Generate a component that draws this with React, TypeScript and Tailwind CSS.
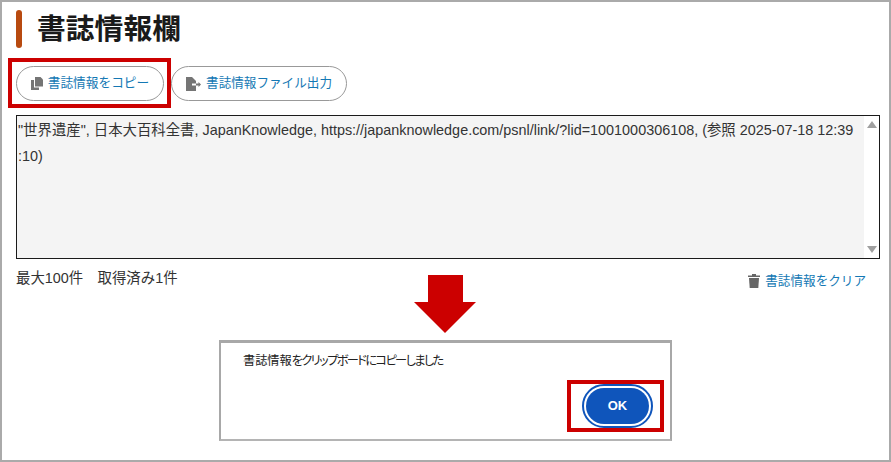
const sans = '"Liberation Sans", "Noto Sans CJK JP", sans-serif';

function CopyIcon() {
  return (
    <svg width="12" height="13" viewBox="0 0 12 13" fill="#757575">
      <path d="M4 0h5.500L12 2.500V9.500H4z" />
      <path d="M0 3h3v7.500h5V13H0z" />
    </svg>
  );
}

function ExportIcon() {
  return (
    <svg width="15" height="14" viewBox="0 0 15 14" fill="#757575">
      <path d="M0 0h6l4 4v2.500H6v2h4V14H0z" />
      <path d="M10 6.500h2.500V5L15 7.500 12.500 10V8.500H10z" />
    </svg>
  );
}

function TrashIcon() {
  return (
    <svg width="12" height="14" viewBox="0 0 12 14" fill="#666666">
      <path d="M0 1.500h4V0h4v1.500h4V3H0z" />
      <path d="M1 4h10l-.7 10H1.700z" />
    </svg>
  );
}

export default function App() {
  return (
    <div
      className="flex h-[462px] w-[891px] flex-col border-2 border-[#aaaaaa] bg-white pl-[14px] pr-[9px] text-[#222222]"
      style={{ fontFamily: sans }}
    >
      <div className="mt-2 flex h-[38px] items-center gap-[15px]">
        <div className="h-[38px] w-[6px] rounded-full bg-[#b84a10]" />
        <h1 className="text-[28.800px] font-bold leading-none text-[#1a1a1a]">書誌情報欄</h1>
      </div>

      <div className="mt-[10px] flex h-[50px] items-start">
        <div className="-ml-2 h-[50px] w-[163px] border-4 border-[#cc0000] pl-1 pt-1">
          <button
            type="button"
            className="flex h-[35px] w-[148px] items-center justify-center gap-[5px] rounded-full border border-[#999999] text-[12.700px] text-[#1478b4]"
          >
            <CopyIcon />
            書誌情報をコピー
          </button>
        </div>
        <button
          type="button"
          className="mt-2 flex h-[35px] w-[176px] items-center justify-center gap-[5px] rounded-full border border-[#999999] text-[12.600px] text-[#1478b4]"
        >
          <ExportIcon />
          書誌情報ファイル出力
        </button>
      </div>

      <div className="mt-[7px] flex h-[144px] w-[864px] border border-[#1a1a1a]">
        <div className="flex-1 bg-[#f4f4f4] pl-px pt-px text-[14.400px] leading-[26px] text-[#333333]">
          "世界遺産", 日本大百科全書, JapanKnowledge, https://japanknowledge.com/psnl/link/?lid=1001000306108, (参照 2025-07-18 12:39
          <br />
          :10)
        </div>
        <div className="flex w-[15px] flex-col items-center justify-between bg-white py-[5px]">
          <div className="h-0 w-0 border-x-[5px] border-b-[7px] border-x-transparent border-b-[#a0a0a0]" />
          <div className="h-0 w-0 border-x-[5px] border-t-[7px] border-x-transparent border-t-[#a0a0a0]" />
        </div>
      </div>

      <div className="mt-[10px] flex items-start justify-between pr-[14px] text-[14.400px]">
        <span className="leading-[18px] text-[#333333]">最大100件　取得済み1件</span>
        <span className="mt-[3px] flex items-center gap-[5px] text-[12.600px] leading-[18px] text-[#1478b4]">
          <TrashIcon />
          書誌情報をクリア
        </span>
      </div>

      <div className="-mt-[15px] ml-[398px] flex w-[62px] flex-col items-center">
        <div className="h-[27px] w-[35px] bg-[#cc0000]" />
        <div className="h-0 w-0 border-x-[31px] border-t-[31px] border-x-transparent border-t-[#cc0000]" />
      </div>

      <div className="ml-[203px] mt-[7px] flex h-[101px] w-[453px] flex-col border-2 border-t-[3px] border-[#a8a8a8] border-b-[#b4b4b4]">
        <p className="ml-[22px] mt-[9px] text-[12.200px] leading-[18px] text-[#222222] [font-feature-settings:'palt']">
          書誌情報<span className="tracking-[-1.600px]">をクリップボードにコピーしました</span>
        </p>
        <div className="mt-[10px] flex justify-end pr-[6px]">
          <div className="flex h-[52px] w-[97px] items-start justify-center overflow-hidden border-4 border-[#cc0000] pl-1">
            <button
              type="button"
              className="h-[44px] w-[71px] shrink-0 rounded-full border-2 border-[#0f55bb] text-[13px] font-bold text-white"
            >
              <span className="m-[2px] flex h-[36px] items-center justify-center rounded-full bg-[#0f55bb]">OK</span>
            </button>
          </div>
        </div>
      </div>
    </div>
  );
}
